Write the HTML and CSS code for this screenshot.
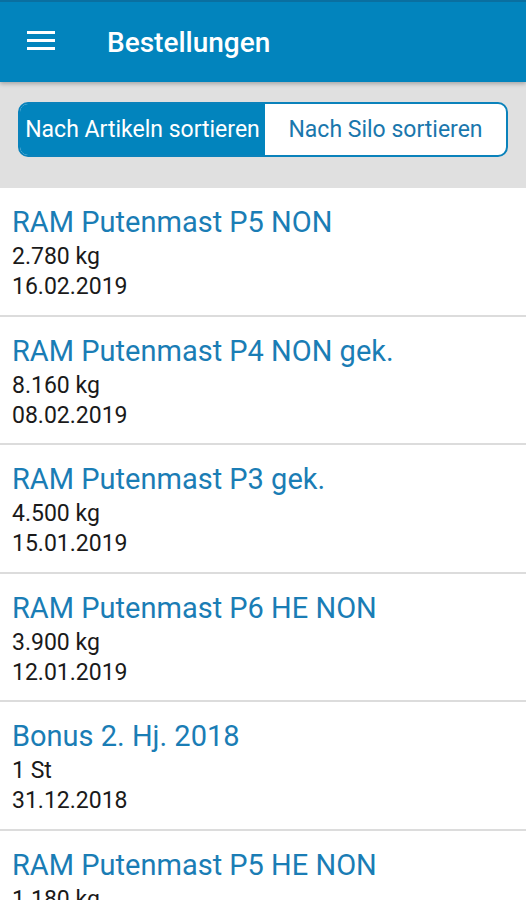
FILE: index.html
```html
<!DOCTYPE html>
<html lang="de">
<head>
<meta charset="utf-8">
<link rel="stylesheet" href="styles.css">
</head>
<body>
<header class="appbar">
  <svg class="menu" width="28" height="22" viewBox="0 0 28 22" aria-hidden="true">
    <rect x="0" y="2" width="28" height="3" fill="#fff"/>
    <rect x="0" y="10" width="28" height="3" fill="#fff"/>
    <rect x="0" y="18" width="28" height="3" fill="#fff"/>
  </svg>
  <h1 class="title">Bestellungen</h1>
</header>
<div class="toolbar">
  <div class="segment">
    <div class="seg seg-active">Nach Artikeln sortieren</div>
    <div class="seg">Nach Silo sortieren</div>
  </div>
</div>
<ul class="list">
  <li class="item"><div class="name">RAM Putenmast P5 NON</div><div class="sub">2.780 kg</div><div class="sub">16.02.2019</div></li>
  <li class="item"><div class="name">RAM Putenmast P4 NON gek.</div><div class="sub">8.160 kg</div><div class="sub">08.02.2019</div></li>
  <li class="item"><div class="name">RAM Putenmast P3 gek.</div><div class="sub">4.500 kg</div><div class="sub">15.01.2019</div></li>
  <li class="item"><div class="name">RAM Putenmast P6 HE NON</div><div class="sub">3.900 kg</div><div class="sub">12.01.2019</div></li>
  <li class="item"><div class="name">Bonus 2. Hj. 2018</div><div class="sub">1 St</div><div class="sub">31.12.2018</div></li>
  <li class="item"><div class="name">RAM Putenmast P5 HE NON</div><div class="sub">1.180 kg</div><div class="sub">05.01.2019</div></li>
</ul>
</body>
</html>
```
FILE: styles.css
```css
html, body {
  margin: 0;
  padding: 0;
  background: #fff;
  font-family: Roboto, "Noto Sans", sans-serif;
  overflow: hidden;
  height: 900px;
}
.appbar {
  height: 82px;
  background: #0284bd;
  border-top: 2px solid #0a6fa0;
  box-sizing: border-box;
  display: flex;
  align-items: center;
  padding-left: 27px;
  box-shadow: 0 2px 4px rgba(0,0,0,0.25);
  position: relative;
  z-index: 1;
}
.menu {
  display: block;
  margin-top: -4px;
}
.title {
  margin: 1px 0 0 52px;
  color: #fff;
  font-size: 28px;
  font-weight: 500;
}
.toolbar {
  background: #e0e0e0;
  height: 106px;
  box-sizing: border-box;
  padding: 20px 18px 0 18px;
}
.segment {
  display: flex;
  height: 55px;
  border: 2px solid #0a82bb;
  border-radius: 10px;
  overflow: hidden;
  box-sizing: border-box;
  background: #fff;
}
.seg {
  flex: 0 0 auto;
  display: flex;
  align-items: center;
  justify-content: center;
  font-size: 23px;
  color: #1a77ad;
  white-space: nowrap;
}
.seg:first-child {
  width: 245px;
}
.seg:last-child {
  flex: 1 1 auto;
}
.seg-active {
  background: #0284bd;
  color: #fff;
}
.list {
  list-style: none;
  margin: 0;
  padding: 0;
}
.item {
  padding: 17px 12px 12.5px 12px;
  border-bottom: 2px solid #dcdcdc;
}
.name {
  font-size: 29px;
  line-height: 34px;
  color: #1a7db5;
  margin-bottom: 3px;
}
.sub {
  font-size: 23px;
  line-height: 30px;
  color: #1a1a1a;
}
```
